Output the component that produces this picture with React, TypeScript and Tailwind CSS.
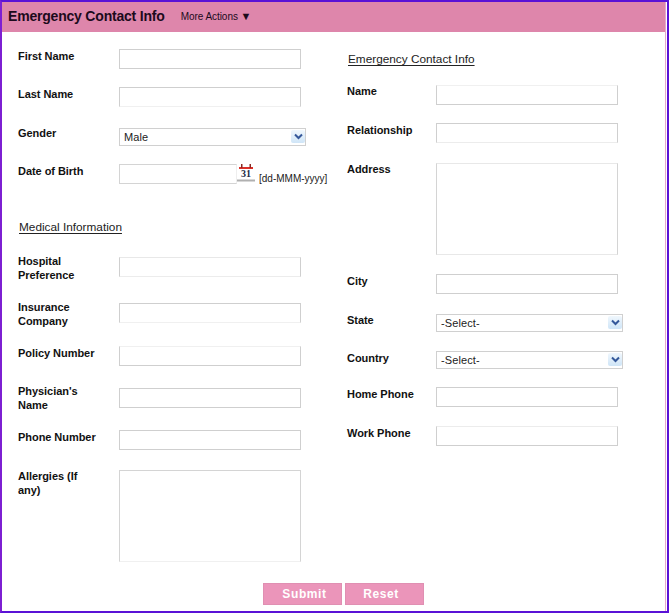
const font = "font-['Liberation_Sans',Arial,sans-serif]";
const labelCls = "w-[101px] shrink-0 text-[11px] leading-[14px] font-bold tracking-[-0.05px] text-[#111]";
const rightLabelCls = "w-[89px] shrink-0 text-[11px] leading-[14px] font-bold tracking-[-0.05px] text-[#111]";
const inputCls = "w-[182px] h-[20px] bg-white border border-[#cfcfcf] outline-none";
const headingCls = "text-[11.8px] leading-[14px] underline underline-offset-2 text-[#222]";

function Chevron() {
    return (
        <span className="pointer-events-none absolute right-[1px] top-[2px] flex h-[13px] w-[14px] items-center justify-center rounded-[2px] bg-gradient-to-b from-[#f0f7fd] to-[#cfe5f7]">
            <svg width="9" height="7" viewBox="0 0 9 7" fill="none">
                <path d="M1 1.5 L4.5 5 L8 1.5" stroke="#35589a" strokeWidth="2" />
            </svg>
        </span>
    );
}

function Select({ width, value, className }: { width: string; value: string; className: string }) {
    return (
        <div className={`relative h-[18px] ${width} ${className}`}>
            <select
                defaultValue={value}
                className="block h-full w-full appearance-none border border-[#d0d0d0] bg-white pl-[4px] text-[11px] tracking-[0.1px] text-[#222] outline-none"
            >
                <option>{value}</option>
            </select>
            <Chevron />
        </div>
    );
}

function CalendarIcon() {
    return (
        <svg width="18" height="18" viewBox="0 0 18 18" className="shrink-0">
            <rect x="2" y="3" width="14" height="2" fill="#dc2f28" />
            <rect x="4" y="0" width="1.5" height="4" fill="#8a2a24" />
            <rect x="12.5" y="0" width="1.5" height="4" fill="#8a2a24" />
            <text x="9" y="12.5" textAnchor="middle" fontSize="10" fontWeight="700" fontFamily="Liberation Serif, serif" fill="#1c2a44">31</text>
            <rect x="0" y="15.5" width="18" height="2" fill="#b0b0b0" />
        </svg>
    );
}

export default function App() {
    return (
        <div className={`${font} flex h-[613px] w-[669px] flex-col overflow-hidden border-t-2 border-r-2 border-b-2 border-l-2 border-t-[#5a12d6] border-r-[#5a12d6] border-b-[#5a12d6] border-l-[#7d1fd2] bg-white`}>
            <div className="flex min-h-0 flex-1 flex-col border-r border-[#e6a8cc] mr-[1px]">
                {/* Header */}
                <div className="flex h-[30px] shrink-0 items-center bg-[#de86ab] pl-[6px] pb-[1px]">
                    <h1 className="text-[14px] font-bold tracking-[-0.2px] text-[#1c0a1c]">Emergency Contact Info</h1>
                    <span className="ml-[16px] text-[10px] tracking-[-0.05px] text-[#1c0a1c]">More Actions <span className="text-[11px]">▼</span></span>
                </div>

                <div className="flex">
                    {/* Left column */}
                    <div className="w-[345px] shrink-0 pl-[16px] pt-[17px]">
                        <div className="flex h-[38px]">
                            <label className={labelCls}>First Name</label>
                            <input className={inputCls} />
                        </div>
                        <div className="flex h-[39px]">
                            <label className={labelCls}>Last Name</label>
                            <input className={`${inputCls} border-b-[#f0f0f0]`} />
                        </div>
                        <div className="flex h-[38px]">
                            <label className={labelCls}>Gender</label>
                            <Select width="w-[187px]" value="Male" className="mt-[2px]" />
                        </div>
                        <div className="flex h-[56px]">
                            <label className={labelCls}>Date of Birth</label>
                            <input className="h-[20px] w-[118px] border border-[#d4d4d4] border-r-[#eeeeee] bg-white outline-none" />
                            <CalendarIcon />
                            <span className="ml-[4px] mt-[9px] text-[10px] leading-[12px] text-[#222]">[dd-MMM-yyyy]</span>
                        </div>
                        <div className="h-[34px] pl-[1px]">
                            <h2 className={headingCls}>Medical Information</h2>
                        </div>
                        <div className="flex h-[46px]">
                            <label className={labelCls}>Hospital<br />Preference</label>
                            <input className={`${inputCls} mt-[3px] border-t-[#e8e8e8] border-b-[#ececec]`} />
                        </div>
                        <div className="flex h-[46px]">
                            <label className={labelCls}>Insurance<br />Company</label>
                            <input className={`${inputCls} mt-[3px] border-b-[#f0f0f0]`} />
                        </div>
                        <div className="flex h-[38px]">
                            <label className={labelCls}>Policy Number</label>
                            <input className={`${inputCls} border-t-[#f0f0f0]`} />
                        </div>
                        <div className="flex h-[46px]">
                            <label className={labelCls}>Physician's<br />Name</label>
                            <input className={`${inputCls} mt-[4px]`} />
                        </div>
                        <div className="flex h-[39px]">
                            <label className={labelCls}>Phone Number</label>
                            <input className={inputCls} />
                        </div>
                        <div className="flex h-[93px]">
                            <label className={labelCls}>Allergies (If<br />any)</label>
                            <textarea className="mt-[1px] h-[92px] w-[182px] resize-none border border-[#d4d4d4] border-b-[#f0f0f0] bg-white outline-none" />
                        </div>
                    </div>

                    {/* Right column */}
                    <div className="pt-[20px]">
                        <div className="h-[32px] pl-[1px]">
                            <h2 className={headingCls}>Emergency Contact Info</h2>
                        </div>
                        <div className="flex h-[39px]">
                            <label className={rightLabelCls}>Name</label>
                            <input className={`${inputCls} mt-[1px] border-t-[#f0f0f0]`} />
                        </div>
                        <div className="flex h-[39px]">
                            <label className={rightLabelCls}>Relationship</label>
                            <input className={`${inputCls} border-b-[#ececec]`} />
                        </div>
                        <div className="flex h-[112px]">
                            <label className={rightLabelCls}>Address</label>
                            <textarea className="mt-[1px] h-[92px] w-[182px] resize-none border border-[#d4d4d4] border-t-[#e8e8e8] border-b-[#e8e8e8] bg-white outline-none" />
                        </div>
                        <div className="flex h-[39px]">
                            <label className={rightLabelCls}>City</label>
                            <input className={inputCls} />
                        </div>
                        <div className="flex h-[38px]">
                            <label className={rightLabelCls}>State</label>
                            <Select width="w-[187px]" value="-Select-" className="mt-[1px]" />
                        </div>
                        <div className="flex h-[36px]">
                            <label className={rightLabelCls}>Country</label>
                            <Select width="w-[187px]" value="-Select-" className="" />
                        </div>
                        <div className="flex h-[39px]">
                            <label className={rightLabelCls}>Home Phone</label>
                            <input className={inputCls} />
                        </div>
                        <div className="flex h-[39px]">
                            <label className={rightLabelCls}>Work Phone</label>
                            <input className={`${inputCls} border-t-[#ececec]`} />
                        </div>
                    </div>
                </div>

                {/* Buttons */}
                <div className="mt-[21px] flex gap-[3px] pl-[261px]">
                    <button className="h-[22px] w-[79px] border border-[#e08fb2] bg-[#eb95ba] pl-[4px] text-[12px] font-bold tracking-[0.6px] text-white">Submit</button>
                    <button className="h-[22px] w-[79px] border border-[#e08fb2] bg-[#eb95ba] pr-[7px] text-[12px] font-bold tracking-[0.6px] text-white">Reset</button>
                </div>
            </div>
        </div>
    );
}
